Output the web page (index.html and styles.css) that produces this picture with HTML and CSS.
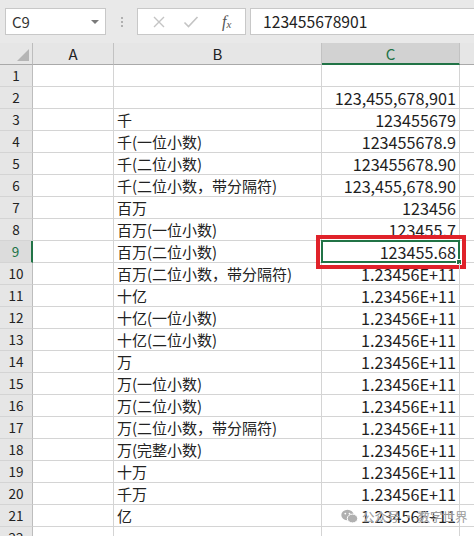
FILE: index.html
```html
<!DOCTYPE html>
<html>
<head>
<meta charset="utf-8">
<link rel="stylesheet" href="styles.css">
</head>
<body>
<div class="app">
  <div class="toolbar">
    <div class="namebox"><span>C9</span><span class="caret"></span></div>
    <div class="sep"><i></i><i></i><i></i></div>
    <div class="fbox">
      <svg class="ico" width="14" height="14" viewBox="0 0 14 14"><path d="M2 2 L12 12 M12 2 L2 12" stroke="#c4c4c4" stroke-width="1.4" fill="none"/></svg>
      <svg class="ico" width="16" height="14" viewBox="0 0 16 14"><path d="M1.5 7.5 L5.5 11.5 L14.5 2" stroke="#c4c4c4" stroke-width="1.6" fill="none"/></svg>
      <span class="fx">f<sub>x</sub></span>
    </div>
    <div class="finput">123455678901</div>
  </div>
  <div class="sheet">
    <div class="hd corner"><span class="tri"></span></div>
    <div class="hd col">A</div>
    <div class="hd col">B</div>
    <div class="hd col sel">C</div>
    <div class="hd col last"></div>

    <div class="rh">1</div><div class="c"></div><div class="c"></div><div class="c num"></div><div class="c end"></div>
    <div class="rh">2</div><div class="c"></div><div class="c"></div><div class="c num">123,455,678,901</div><div class="c end"></div>
    <div class="rh">3</div><div class="c"></div><div class="c txt">千</div><div class="c num">123455679</div><div class="c end"></div>
    <div class="rh">4</div><div class="c"></div><div class="c txt">千(一位小数)</div><div class="c num">123455678.9</div><div class="c end"></div>
    <div class="rh">5</div><div class="c"></div><div class="c txt">千(二位小数)</div><div class="c num">123455678.90</div><div class="c end"></div>
    <div class="rh">6</div><div class="c"></div><div class="c txt">千(二位小数，带分隔符)</div><div class="c num">123,455,678.90</div><div class="c end"></div>
    <div class="rh">7</div><div class="c"></div><div class="c txt">百万</div><div class="c num">123456</div><div class="c end"></div>
    <div class="rh">8</div><div class="c"></div><div class="c txt">百万(一位小数)</div><div class="c num">123455.7</div><div class="c end"></div>
    <div class="rh rsel">9</div><div class="c"></div><div class="c txt">百万(二位小数)</div><div class="c num active">123455.68<span class="handle"></span><span class="mark"></span></div><div class="c end"></div>
    <div class="rh">10</div><div class="c"></div><div class="c txt">百万(二位小数，带分隔符)</div><div class="c num">1.23456E+11</div><div class="c end"></div>
    <div class="rh">11</div><div class="c"></div><div class="c txt">十亿</div><div class="c num">1.23456E+11</div><div class="c end"></div>
    <div class="rh">12</div><div class="c"></div><div class="c txt">十亿(一位小数)</div><div class="c num">1.23456E+11</div><div class="c end"></div>
    <div class="rh">13</div><div class="c"></div><div class="c txt">十亿(二位小数)</div><div class="c num">1.23456E+11</div><div class="c end"></div>
    <div class="rh">14</div><div class="c"></div><div class="c txt">万</div><div class="c num">1.23456E+11</div><div class="c end"></div>
    <div class="rh">15</div><div class="c"></div><div class="c txt">万(一位小数)</div><div class="c num">1.23456E+11</div><div class="c end"></div>
    <div class="rh">16</div><div class="c"></div><div class="c txt">万(二位小数)</div><div class="c num">1.23456E+11</div><div class="c end"></div>
    <div class="rh">17</div><div class="c"></div><div class="c txt">万(二位小数，带分隔符)</div><div class="c num">1.23456E+11</div><div class="c end"></div>
    <div class="rh">18</div><div class="c"></div><div class="c txt">万(完整小数)</div><div class="c num">1.23456E+11</div><div class="c end"></div>
    <div class="rh">19</div><div class="c"></div><div class="c txt">十万</div><div class="c num">1.23456E+11</div><div class="c end"></div>
    <div class="rh">20</div><div class="c"></div><div class="c txt">千万</div><div class="c num">1.23456E+11</div><div class="c end"></div>
    <div class="rh">21</div><div class="c"></div><div class="c txt">亿</div><div class="c num">1.23456E+11</div><div class="c end"></div>
    <div class="rh">22</div><div class="c"></div><div class="c"></div><div class="c num"></div><div class="c end"></div>
  </div>
  <div class="watermark">
    <svg width="17" height="15" viewBox="0 0 17 15"><ellipse cx="6.5" cy="6" rx="6.2" ry="5.3" fill="#b0b0b0"/><ellipse cx="11.5" cy="9.5" rx="5.2" ry="4.4" fill="#b0b0b0" stroke="#fff" stroke-width="1"/><circle cx="4.3" cy="4.6" r="0.9" fill="#fff"/><circle cx="8.5" cy="4.6" r="0.9" fill="#fff"/></svg>
    <span>公众号 · 数字世界</span>
  </div>
</div>
</body>
</html>
```

FILE: styles.css
```css
* { box-sizing: border-box; }
html, body { margin: 0; padding: 0; }
body {
  width: 474px;
  height: 536px;
  overflow: hidden;
  background: #ffffff;
  font-family: "Noto Sans CJK SC", "Noto Sans", sans-serif;
  color: #222;
}
.app { position: relative; width: 474px; height: 536px; overflow: hidden; }

.toolbar {
  height: 43px;
  background: #e9e9e9;
  display: flex;
  align-items: flex-start;
  padding: 8px 0 0 5px;
}
.namebox {
  width: 101px;
  height: 27px;
  background: #fff;
  border: 1px solid #c8c8c8;
  display: flex;
  align-items: center;
  justify-content: space-between;
  padding: 0 6px 0 6px;
  font-size: 15px;
  color: #333;
}
.caret {
  width: 0; height: 0;
  border-left: 4px solid transparent;
  border-right: 4px solid transparent;
  border-top: 4px solid #7a7a7a;
}
.sep {
  width: 31px;
  height: 27px;
  display: flex;
  flex-direction: column;
  align-items: center;
  justify-content: center;
  gap: 2px;
}
.sep i { display: block; width: 2px; height: 2px; background: #b0b0b0; }
.fbox {
  width: 109px;
  height: 27px;
  background: #fff;
  border: 1px solid #c8c8c8;
  display: flex;
  align-items: center;
  padding: 0 6px 0 14px;
  gap: 17px;
}
.fbox .ico { display: block; }
.fx {
  font-family: "Liberation Serif", serif;
  font-style: italic;
  font-size: 16px;
  color: #555;
  margin-left: 6px;
  line-height: 1;
}
.fx sub { font-size: 11px; vertical-align: -1px; }
.finput {
  margin-left: 4px;
  flex: 1;
  height: 27px;
  background: #fff;
  border: 1px solid #c8c8c8;
  border-right: none;
  font-size: 15.7px;
  line-height: 25px;
  padding-left: 12px;
  color: #222;
}

.sheet {
  display: grid;
  grid-template-columns: 33px 81px 208px 138px 14px;
  grid-auto-rows: 22px;
}
.hd {
  background: #e6e6e6;
  border-bottom: 1px solid #a9a9a9;
  border-right: 1px solid #c2c2c2;
  font-size: 15px;
  text-align: center;
  line-height: 21px;
  color: #222;
}
.hd.corner { position: relative; border-right: 1px solid #bdbdbd; }
.tri {
  position: absolute;
  right: 3px;
  bottom: 3px;
  width: 0; height: 0;
  border-left: 12px solid transparent;
  border-bottom: 12px solid #b5b5b5;
}
.hd.sel {
  background: #d2d2d2;
  color: #217346;
  border-bottom: 2px solid #217346;
}
.hd.last { border-right: none; }
.rh {
  background: #e6e6e6;
  border-right: 1px solid #bdbdbd;
  border-bottom: 1px solid #d4d4d4;
  font-size: 13.5px;
  text-align: center;
  line-height: 21px;
  color: #222;
}
.rh.rsel {
  background: #dcdcdc;
  color: #217346;
  border-right: 2px solid #217346;
}
.c {
  border-right: 1px solid #d4d4d4;
  border-bottom: 1px solid #d4d4d4;
  white-space: nowrap;
  overflow: visible;
  line-height: 21px;
}
.c.end { border-right: none; }
.txt { font-size: 15px; padding-left: 3px; }
.num { font-size: 16.2px; text-align: right; padding-right: 3px; position: relative; padding-top: 1px; color: #1e1e1e; }
.active::before {
  content: "";
  position: absolute;
  left: -1px; top: -1px; right: -1px; bottom: -1px;
  border: 2px solid #217346;
  pointer-events: none;
}
.handle {
  position: absolute;
  right: -3px;
  bottom: -3px;
  width: 6px; height: 6px;
  background: #217346;
  border: 1px solid #fff;
}
.mark {
  position: absolute;
  left: -6px; top: -6px; right: -7px; bottom: -7px;
  border: 4px solid #e0222a;
  pointer-events: none;
}
.watermark {
  position: absolute;
  left: 341px;
  top: 507px;
  display: flex;
  align-items: center;
  gap: 4px;
  font-size: 12.5px;
  color: #9c9c9c;
  white-space: nowrap;
  text-shadow: 0 0 1px #ffffff;
}
.watermark svg { display: block; }
```
